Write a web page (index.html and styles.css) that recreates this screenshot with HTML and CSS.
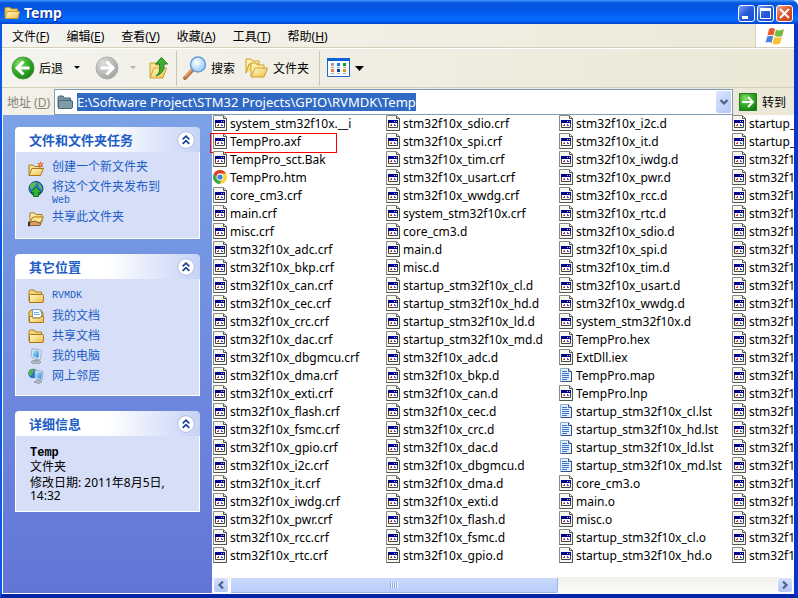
FILE: index.html
```html
<!DOCTYPE html>
<html lang="zh-CN">
<head>
  <meta charset="UTF-8">
  <title>Temp</title>
  <link rel="stylesheet" href="styles.css">
</head>
<body>
  <!-- Shared icons -->
  <svg class="defs" aria-hidden="true">
    <defs>
      <linearGradient id="gold" x1="0" y1="0" x2="1" y2="1"><stop offset="0" stop-color="#fffbd0"/><stop offset="1" stop-color="#edbe45"/></linearGradient>
      <radialGradient id="green" cx=".35" cy=".3" r=".8"><stop offset="0" stop-color="#8be06b"/><stop offset=".5" stop-color="#35ad2c"/><stop offset="1" stop-color="#137a12"/></radialGradient>
      <radialGradient id="grey" cx=".35" cy=".3" r=".8"><stop offset="0" stop-color="#dedede"/><stop offset="1" stop-color="#9d9d9d"/></radialGradient>
      <radialGradient id="glass" cx=".4" cy=".35" r=".7"><stop offset="0" stop-color="#fff"/><stop offset="1" stop-color="#8fc6f5"/></radialGradient>
      <linearGradient id="screen" x1="0" y1="0" x2="1" y2="1"><stop offset="0" stop-color="#c4ecff"/><stop offset="1" stop-color="#1780dc"/></linearGradient>
    </defs>
    <symbol id="i-folder" viewBox="0 0 16 16">
      <path d="M1 13V3.500Q1 2 2.500 2H6L7.500 4H13.500V6" fill="#f4d676" stroke="#a8781b"/>
      <path d="M1.500 14.500V7.500Q1.500 6.500 2.500 6.500H14Q15.500 6.500 15.500 7.500V13Q15.500 14.500 14 14.500Z" fill="url(#gold)" stroke="#a8781b"/>
    </symbol>
    <symbol id="i-open" viewBox="0 0 16 16">
      <path d="M1 14V4H5L6.500 5.500H12V8" fill="#f8e391" stroke="#a8781b"/>
      <path d="M1 14.500L4 7.500H15.500L12.500 14.500Z" fill="url(#gold)" stroke="#a8781b"/>
    </symbol>
    <symbol id="i-new" viewBox="0 0 16 16">
      <use href="#i-open"/>
      <path d="M12.500 0L13.300 2.500L16 2L14 4L15.500 6.500L12.500 5.200L10 6.500L11 4L9 2L11.700 2.500Z" fill="#e84c22"/>
      <circle cx="12.500" cy="3.600" r="1" fill="#ffd34d"/>
    </symbol>
    <symbol id="i-web" viewBox="0 0 16 16">
      <circle cx="8" cy="7.500" r="7" fill="#2878c8" stroke="#174a80"/>
      <path d="M2 4Q6 0 9 2L6 6L4 8L2 7ZM10 1.500Q14 4 14 9L11 6Z" fill="#64ba4b"/>
      <path d="M8 6L13.500 11.500H10.500V15.500H5.500V11.500H2.500Z" fill="#35b434" stroke="#126c19"/>
    </symbol>
    <symbol id="i-share" viewBox="0 0 16 16">
      <path d="M2 11V2H7L8 3.500H14V11Z" fill="url(#gold)" stroke="#a8781b"/>
      <path d="M2 11L5 6H15.500L12 12Z" fill="#fce691" stroke="#a8781b"/>
      <path d="M0 11H3L7 10L13 12.500L12 14.500H6L0 15Z" fill="#e09a5b" stroke="#5d381d" stroke-width=".7"/>
      <path d="M0 11H2V15H0Z" fill="#333"/>
    </symbol>
    <symbol id="i-docs" viewBox="0 0 16 16">
      <path d="M1 14V4L3 2H13L15 5V14Z" fill="#f1cb60" stroke="#a8781b"/>
      <path d="M4.500 10V1.500H11L13.500 4V10Z" fill="#fff" stroke="#6c9cc9"/>
      <path d="M6 4.500H11M6 6.500H12" stroke="#75aee2"/>
      <path d="M1.500 8.500H4L5 10H12L13 8.500H15.500V14.500H1.500Z" fill="url(#gold)" stroke="#a8781b"/>
    </symbol>
    <symbol id="i-pc" viewBox="0 0 16 16">
      <ellipse cx="8" cy="14" rx="5" ry="1.800" fill="#b9bec8" stroke="#7d8493" stroke-width=".6"/>
      <path d="M9 10L11 11L10 14H6Z" fill="#989fae"/>
      <path d="M4 .5L12.500 2L13.500 3L12.500 11L11 12L4 9.500L3 8.500Z" fill="#dce6f3" stroke="#8999b3" stroke-width=".7"/>
      <path d="M5 2L11 3L10.500 10L4.500 8Z" fill="url(#screen)"/>
    </symbol>
    <symbol id="i-net" viewBox="0 0 16 16">
      <circle cx="5" cy="5.500" r="4.800" fill="#2878c8"/>
      <path d="M1 3Q4 0 6 1L5 4L3 8L1 7Z" fill="#54b546"/>
      <path d="M7 2L15 3.500L14 12L7 10Z" fill="#dce6f3" stroke="#8999b3" stroke-width=".8"/>
      <path d="M8 3.500L14 4.500L13 11L8 9Z" fill="url(#screen)"/>
      <path d="M10 12L14 13.500L11 15.500L6 14Z" fill="#b9bec8" stroke="#6f7686" stroke-width=".6"/>
    </symbol>
    <!-- unknown file type -->
    <symbol id="i-file" viewBox="0 0 14 16">
      <path d="M.5 .5H10.500L13.500 3.500V15.500H.5Z" fill="#f8f8f2" stroke="#8a8a84"/>
      <path d="M10.500 1V3.500H13.500V15.500H.5" fill="none" stroke="#55554f"/>
      <path d="M2.500 5.500H11.500V12.500H2.500Z" fill="#fff" stroke="#44443e"/>
      <path d="M2 5H12V8H2Z" fill="#000090"/>
      <path d="M8 6H9V7H8ZM10 6H11V7H10Z" fill="#d8cc72"/>
      <path d="M4 10H5V9H6V11H4Z" fill="#d03030"/>
      <path d="M8 9H9V10H10V11H8Z" fill="#3159e4"/>
    </symbol>
    <symbol id="i-text" viewBox="0 0 14 16">
      <path d="M1.500 1.500H9.500L12.500 4.500V14.500H1.500Z" fill="#e4efff" stroke="#8fabd2"/>
      <path d="M9.500 1.500V4.500H12.500V14.500H2" fill="none" stroke="#34527e"/>
      <path d="M3 4.500H8M3 6.500H10M3 8.500H10M3 10.500H10M3 12.500H8" stroke="#3672cb"/>
    </symbol>
    <symbol id="i-chrome" viewBox="0 0 14 14">
      <circle cx="7" cy="7" r="7" fill="#ffd23e"/>
      <path d="M.9 3.500A7 7 0 0 1 13.100 3.500H7A3.500 3.500 0 0 0 4 8.700Z" fill="#dd3d31"/>
      <path d="M.9 3.500L4 8.700A3.500 3.500 0 0 0 8.500 10.200L6.500 14A7 7 0 0 1 .9 3.500Z" fill="#37a852"/>
      <circle cx="7" cy="7" r="3.400" fill="#fff"/>
      <circle cx="7" cy="7" r="2.600" fill="#3b82dc"/>
    </symbol>
    <symbol id="i-up2" viewBox="0 0 18 18">
      <circle cx="9" cy="9" r="7.500" fill="#fff" stroke="#b8c3e6"/>
      <path d="M6 8.500L9 5.500L12 8.500M6 12.500L9 9.500L12 12.500" fill="none" stroke="#1b3f91" stroke-width="1.500"/>
    </symbol>
    <symbol id="i-chev" viewBox="0 0 10 10">
      <path d="M1.500 3L5 6.500L8.500 3" fill="none" stroke="#4d6185" stroke-width="2.200"/>
    </symbol>
  </svg>

  <div class="window">
    <header class="titlebar">
      <svg class="icon" viewBox="0 0 16 16"><path d="M1 12V3.500Q1 2.500 2 2.500H6L7.500 4H13.500V6" fill="#f4d676" stroke="#c9962c"/><path d="M1 13.500L3 6.500H15.500L14 13.500Z" fill="url(#gold)" stroke="#c9962c"/></svg>
      <h1>Temp</h1>
      <button class="win-btn" aria-label="最小化"><svg viewBox="0 0 15 15"><path d="M3 10H9V13H3Z" fill="#fff"/></svg></button>
      <button class="win-btn" aria-label="最大化"><svg viewBox="0 0 15 15"><path d="M2.500 3.500H12.500V12.500H2.500ZM2 4H13" fill="none" stroke="#fff"/><path d="M2 2H13V5H2Z" fill="#fff"/></svg></button>
      <button class="win-btn close" aria-label="关闭"><svg viewBox="0 0 15 15"><path d="M3 3L12 12M12 3L3 12" stroke="#fff" stroke-width="2"/></svg></button>
    </header>

    <nav class="menubar">
      <button>文件(<u>F</u>)</button>
      <button>编辑(<u>E</u>)</button>
      <button>查看(<u>V</u>)</button>
      <button>收藏(<u>A</u>)</button>
      <button>工具(<u>T</u>)</button>
      <button>帮助(<u>H</u>)</button>
      <div class="brand">
        <svg viewBox="0 0 20 18">
          <path d="M4 2Q7 0 10 2L8.500 8.500Q5.500 7 2.500 8.500Z" fill="#e8592b"/>
          <path d="M11 2.500Q14 4.500 19 2L17.200 9Q13 10.500 9.500 8.800Z" fill="#7bb93c"/>
          <path d="M2.200 9.500Q5.500 8 8.200 9.500L6.500 16Q4 14.300 .5 15.800Z" fill="#4a83d6"/>
          <path d="M9.200 10Q12.500 11.500 16.800 10L15 16.500Q11 18.500 7.500 16.500Z" fill="#f7c331"/>
        </svg>
      </div>
    </nav>

    <div class="toolbar">
      <button class="tool">
        <svg class="big" viewBox="0 0 24 24"><circle cx="12" cy="12" r="11" fill="url(#green)" stroke="#4b9a45"/><path d="M12.500 5.500L6 12L12.500 18.500M6.500 12H18.500" fill="none" stroke="#fff" stroke-width="3"/></svg>
        后退
      </button>
      <button class="drop" aria-label="后退列表"><svg viewBox="0 0 6 4"><path d="M0 0H6L3 3Z"/></svg></button>
      <button class="tool forward" aria-label="前进" disabled>
        <svg class="big" viewBox="0 0 24 24"><circle cx="12" cy="12" r="11" fill="url(#grey)" stroke="#b0b0b0"/><path d="M11.500 5.500L18 12L11.500 18.500M17.500 12H5.500" fill="none" stroke="#fff" stroke-width="3"/></svg>
      </button>
      <button class="drop off" aria-label="前进列表" disabled><svg viewBox="0 0 6 4"><path d="M0 0H6L3 3Z"/></svg></button>
      <button class="tool up" aria-label="向上">
        <svg class="big" viewBox="0 0 24 24"><path d="M3 21V7H8L9 9H15V12" fill="#f8e391" stroke="#d0a02e"/><path d="M3 22L7 12H19.500L16 22Z" fill="url(#gold)" stroke="#d0a02e"/><path d="M9 20Q14 17 12.500 8H8.500L14.500 1.500L20.500 8H17Q18 17 9 20Z" fill="#3fae31" stroke="#1e7b1b"/></svg>
      </button>
      <span class="sep"></span>
      <button class="tool">
        <svg class="big" viewBox="0 0 24 24"><path d="M2 22L9.500 14" stroke="#b96f3e" stroke-width="4" stroke-linecap="round"/><path d="M2 21L9 13.500" stroke="#e9a876" stroke-width="1.500"/><circle cx="15" cy="8.500" r="7.500" fill="url(#glass)" stroke="#6a9ed6" stroke-width="1.500"/></svg>
        搜索
      </button>
      <button class="tool folders">
        <svg class="big" viewBox="0 0 24 24"><path d="M1 17V3H6L8 5H14V8" fill="#fff0a6" stroke="#cf9c28"/><path d="M1 17L4 8H14" fill="#f8dc78" stroke="#cf9c28"/><path d="M6 20V7H11L12.500 9H19V12" fill="#fff0a6" stroke="#cf9c28"/><path d="M6 21L10 12H22.500L19 21Z" fill="url(#gold)" stroke="#cf9c28"/></svg>
        文件夹
      </button>
      <span class="sep"></span>
      <button class="tool views" aria-label="查看方式">
        <svg class="big" viewBox="0 0 24 20"><path d="M.5 .5H22.500V18.500H.5Z" fill="#f7fbff" stroke="#2267c8"/><path d="M0 0H23V3H0Z" fill="#0a62d6"/><path d="M4 5H7V8H4Z" fill="#9a9ac8"/><path d="M10 5H13V8H10Z" fill="#197be0"/><path d="M16 5H19V8H16Z" fill="#149a1e"/><path d="M4 11H7V14H4Z" fill="#f47c52"/><path d="M10 11H13V14H10Z" fill="#123f9e"/><path d="M16 11H19V14H16Z" fill="#d19e0c"/><path d="M4 9.500H7M10 9.500H13M16 9.500H19M4 15.500H7M10 15.500H13M16 15.500H19" stroke="#aaa"/></svg>
        <svg class="tri" viewBox="0 0 9 5"><path d="M0 0H9L4.500 5Z"/></svg>
      </button>
    </div>

    <form class="address">
      <label for="path">地址 (<u>D</u>)</label>
      <div class="combo">
        <svg class="icon" viewBox="0 0 16 16"><path d="M1 13V3.500Q1 2 2.500 2H6L7.500 4H13.500V6" fill="#7592a0" stroke="#4a6672"/><path d="M1.500 14.500V7.500Q1.500 6.500 2.500 6.500H14Q15.500 6.500 15.500 7.500V13Q15.500 14.500 14 14.500Z" fill="#7f9ba6" stroke="#4a6672"/></svg>
        <input type="text" id="path" value="E:\Software Project\STM32 Projects\GPIO\RVMDK\Temp" spellcheck="false">
        <button type="button" class="combo-btn" aria-label="历史"><svg viewBox="0 0 10 10"><use href="#i-chev"/></svg></button>
      </div>
      <button type="button" class="go">
        <svg viewBox="0 0 18 18"><path d="M.5 .5H17.500V17.500H.5Z" fill="url(#green)" stroke="#1f7d1d"/><path d="M9 4L14 9L9 14M13.500 9H3" fill="none" stroke="#fff" stroke-width="2"/></svg>
        转到
      </button>
    </form>

    <main class="content">
      <aside class="sidebar">
        <section class="panel">
          <h2>文件和文件夹任务 <button aria-label="折叠"><svg><use href="#i-up2"/></svg></button></h2>
          <ul class="links tasks">
            <li><svg class="icon"><use href="#i-new"/></svg><a href="#">创建一个新文件夹</a></li>
            <li><svg class="icon"><use href="#i-web"/></svg><a href="#">将这个文件夹发布到<br><span class="latin">Web</span></a></li>
            <li><svg class="icon"><use href="#i-share"/></svg><a href="#">共享此文件夹</a></li>
          </ul>
        </section>
        <section class="panel">
          <h2>其它位置 <button aria-label="折叠"><svg><use href="#i-up2"/></svg></button></h2>
          <ul class="links">
            <li><svg class="icon"><use href="#i-folder"/></svg><a href="#" class="latin">RVMDK</a></li>
            <li><svg class="icon"><use href="#i-docs"/></svg><a href="#">我的文档</a></li>
            <li><svg class="icon"><use href="#i-folder"/></svg><a href="#">共享文档</a></li>
            <li><svg class="icon"><use href="#i-pc"/></svg><a href="#">我的电脑</a></li>
            <li><svg class="icon"><use href="#i-net"/></svg><a href="#">网上邻居</a></li>
          </ul>
        </section>
        <section class="panel">
          <h2>详细信息 <button aria-label="折叠"><svg><use href="#i-up2"/></svg></button></h2>
          <div class="details">
            <p><b>Temp</b><br>文件夹</p>
            <p>修改日期: 2011年8月5日,<br>14:32</p>
          </div>
        </section>
      </aside>

      <div class="pane">
        <ul class="files" id="files"></ul>
        <div class="scrollbar">
          <button class="scroll-btn" aria-label="向左"><svg class="left" viewBox="0 0 10 10"><use href="#i-chev"/></svg></button>
          <div class="track"><div class="thumb"></div></div>
          <button class="scroll-btn" aria-label="向右"><svg class="right" viewBox="0 0 10 10"><use href="#i-chev"/></svg></button>
        </div>
      </div>
    </main>
  </div>
  <script src="script.js"></script>
</body>
</html>
```
FILE: styles.css
```css
* {
  box-sizing: border-box;
}
body {
  margin: 0;
  font-family: "Noto Sans", "Noto Sans CJK SC", sans-serif;
  font-size: 12px;
  color: #000;
}
button {
  padding: 0;
  border: 0;
  background: none;
  font: inherit;
  color: inherit;
}
ul, h1, h2, p {
  margin: 0;
  padding: 0;
  list-style: none;
}
svg {
  display: block;
  flex: none;
}
.defs {
  position: absolute;
  width: 0;
  height: 0;
}
.icon {
  width: 16px;
  height: 16px;
}

/* Window frame */
.window {
  display: flex;
  flex-direction: column;
  height: 100vh;
  border: solid #0842d8;
  border-width: 0 4px 4px 2px;
  border-color: #0842d8 #0a35c8 #0326a8 #0a5ae8;
  border-radius: 0 7px 0 0;
  background: #ece9d8;
}
.titlebar {
  display: flex;
  flex: none;
  align-items: center;
  gap: 2px;
  height: 24px;
  margin: 0 -4px 0 -2px;
  padding: 2px 5px 0 4px;
  border-radius: 0 7px 0 0;
  background: linear-gradient(#3c96fb 0, #0855dd 3px, #0355e5 10px, #026afe 18px, #0265f8 21px, #0040c8 24px);
}
.titlebar h1 {
  flex: 1;
  padding-left: 2px;
  font-size: 14px;
  line-height: 20px;
  color: #fff;
  text-shadow: 1px 1px #0a1883;
}
.win-btn {
  width: 17px;
  height: 17px;
  border: 1px solid #fff;
  border-radius: 3px;
  background: linear-gradient(135deg, #7ea3f4, #2558da 50%, #1c4fd0);
}
.win-btn.close {
  background: linear-gradient(135deg, #f0a58c, #e0532c 50%, #c83c14);
}

/* Bars */
.menubar {
  display: flex;
  flex: none;
  gap: 17px;
  height: 24px;
  padding-left: 10px;
  border-bottom: 1px solid #d4cfb9;
  background: linear-gradient(90deg, #f5f4f0, #ece9d8);
}
.brand {
  display: flex;
  align-items: center;
  justify-content: center;
  width: 39px;
  margin-left: auto;
  border-left: 1px solid #d4cfb9;
  background: #fff;
}
.brand svg {
  width: 20px;
  height: 18px;
}
.toolbar {
  display: flex;
  flex: none;
  align-items: center;
  height: 40px;
  padding-left: 9px;
  border-top: 1px solid #fff;
  border-bottom: 1px solid #d4cfb9;
  background: linear-gradient(90deg, #f4f3ee, #ebe8d7);
}
.tool {
  display: flex;
  align-items: center;
  gap: 4px;
}
.big {
  width: 24px;
  height: 24px;
}
.drop {
  padding: 0 11px;
}
.drop svg {
  width: 6px;
  height: 4px;
}
.forward {
  margin-left: 4px;
}
.off {
  fill: #b4b1a3;
}
.up {
  padding-right: 5px;
}
.sep {
  width: 1px;
  height: 35px;
  margin-right: 6px;
  background: #c9c5b2;
}
.folders {
  margin: 0 10px;
}
.views {
  padding-left: 1px;
}
.views .big {
  height: 20px;
}
.tri {
  width: 9px;
  height: 5px;
}
.address {
  display: flex;
  flex: none;
  align-items: center;
  height: 27px;
  padding: 1px 0 0 5px;
  background: linear-gradient(90deg, #f2f0e8, #ebe8d7);
}
.address label {
  width: 47px;
  color: #858379;
}
.combo {
  display: flex;
  flex: 1;
  align-items: center;
  height: 26px;
  padding: 0 1px 0 2px;
  border: 1px solid #7f9db9;
  background: #fff;
}
.combo input {
  flex: 1;
  min-width: 0;
  padding: 0 0 0 4px;
  border: 0;
  outline: 0;
  background: none;
  font: 13px/18px "Noto Sans", sans-serif;
}
.combo input::selection {
  background: #316ac5;
  color: #fff;
}
.combo-btn {
  display: flex;
  align-items: center;
  justify-content: center;
  width: 15px;
  height: 22px;
  border-radius: 2px;
  background: linear-gradient(135deg, #dbe6fe, #b2c7f5);
}
.combo-btn svg,
.scroll-btn svg {
  width: 10px;
  height: 10px;
}
.go {
  display: flex;
  align-items: center;
  gap: 5px;
  width: 61px;
  padding-left: 6px;
}
.go svg {
  width: 18px;
  height: 18px;
}

/* Task pane */
.content {
  display: flex;
  flex: 1;
  min-height: 0;
}
.sidebar {
  flex: none;
  width: 210px;
  padding: 12px 12px 0 12px;
  border: solid #fff;
  border-width: 0 0 1px 1px;
  background: linear-gradient(#7ba2e7, #6375d6);
}
.panel {
  margin-bottom: 15px;
  color: #215dc6;
}
.panel h2 {
  display: flex;
  align-items: center;
  justify-content: space-between;
  height: 25px;
  padding: 0 4px 0 14px;
  border-radius: 4px 4px 0 0;
  background: linear-gradient(90deg, #fff 50%, #c6d3f7);
  font-size: 13px;
}
.panel h2 svg {
  width: 20px;
  height: 20px;
}
.links,
.details {
  border: 1px solid #fff;
  border-top: 0;
  background: #d6dff7;
}
.links {
  display: flex;
  flex-direction: column;
  gap: 4px;
  padding: 9px 12px 11px;
}
.links li {
  display: flex;
  gap: 8px;
  height: 16px;
}
.links a {
  line-height: 16px;
  color: inherit;
  text-decoration: none;
}
.links.tasks {
  gap: 4px;
}
.tasks li {
  height: auto;
}
.tasks a {
  line-height: 12px;
}
.latin {
  font-family: "Liberation Mono", monospace;
  font-size: 10px;
}
.details {
  padding: 9px 14px 9px;
  line-height: 13px;
  color: #000;
}
.details p + p {
  margin-top: 3px;
}
.details b {
  font-family: "Liberation Mono", monospace;
}

/* File list */
.pane {
  display: flex;
  flex: 1;
  flex-direction: column;
  min-width: 0;
  background: #fff;
}
.files {
  position: relative;
  display: grid;
  flex: 1;
  grid-template-rows: repeat(25, 18px);
  grid-auto-columns: 173px;
  grid-auto-flow: column;
  margin-left: -4px;
  padding-left: 5px;
  overflow: hidden;
}
.files li {
  position: relative;
  display: flex;
  gap: 3px;
  line-height: 17px;
  white-space: nowrap;
}
.files svg {
  width: 14px;
  height: 16px;
}
.files .marked::after {
  content: "";
  position: absolute;
  inset: 0 auto -2px -3px;
  width: 125px;
  border: 1px solid #f00;
}
.scrollbar {
  display: flex;
  flex: none;
  gap: 1px;
  height: 17px;
  padding: 0 1px;
  background: linear-gradient(#f0efe9, #fefefb);
}
.scroll-btn {
  display: flex;
  align-items: center;
  justify-content: center;
  width: 16px;
  height: 16px;
  border: 1px solid #fff;
  border-radius: 3px;
  background: linear-gradient(#d4e1fe, #b4c8f6);
}
.left {
  transform: rotate(90deg);
}
.right {
  transform: rotate(-90deg);
}
.track {
  flex: 1;
}
.thumb {
  width: 60%;
  height: 16px;
  border: 1px solid #9db5e8;
  border-top-color: #fff;
  border-left-color: #fff;
  border-radius: 2px;
  background:
    repeating-linear-gradient(90deg, #8caae6 0 1px, #eef4fe 1px 2px) center / 8px 6px no-repeat,
    linear-gradient(#cadafd, #b9cdf9);
}
```
FILE: script.js
```js
const modules = ['adc', 'bkp', 'can', 'cec', 'crc', 'dac', 'dbgmcu', 'dma', 'exti', 'flash', 'fsmc', 'gpio',
  'i2c', 'it', 'iwdg', 'pwr', 'rcc', 'rtc', 'sdio', 'spi', 'tim', 'usart', 'wwdg'];
const chips = ['cl', 'hd', 'ld', 'md'];
const driver = ext => modules.map(m => `stm32f10x_${m}.${ext}`);
const startup = ext => chips.map(c => `startup_stm32f10x_${c}.${ext}`);

const files = [
  'system_stm32f10x.__i', 'TempPro.axf', 'TempPro_sct.Bak', 'TempPro.htm',
  'core_cm3.crf', 'main.crf', 'misc.crf', ...driver('crf'), 'system_stm32f10x.crf',
  'core_cm3.d', 'main.d', 'misc.d', ...startup('d'), ...driver('d'), 'system_stm32f10x.d',
  'TempPro.hex', 'ExtDll.iex', 'TempPro.map', 'TempPro.lnp', ...startup('lst'),
  'core_cm3.o', 'main.o', 'misc.o', ...startup('o'), ...driver('o')
];

function iconFor(name) {
  if (name.endsWith('.htm')) return 'i-chrome';
  if (/\.(map|lst)$/.test(name)) return 'i-text';
  return 'i-file';
}

document.getElementById('files').innerHTML = files.map(name =>
  `<li${name === 'TempPro.axf' ? ' class="marked"' : ''}><svg><use href="#${iconFor(name)}"/></svg>${name}</li>`
).join('');

// the path starts out selected, as after clicking the address bar
const path = document.getElementById('path');
path.focus();
path.select();
```
